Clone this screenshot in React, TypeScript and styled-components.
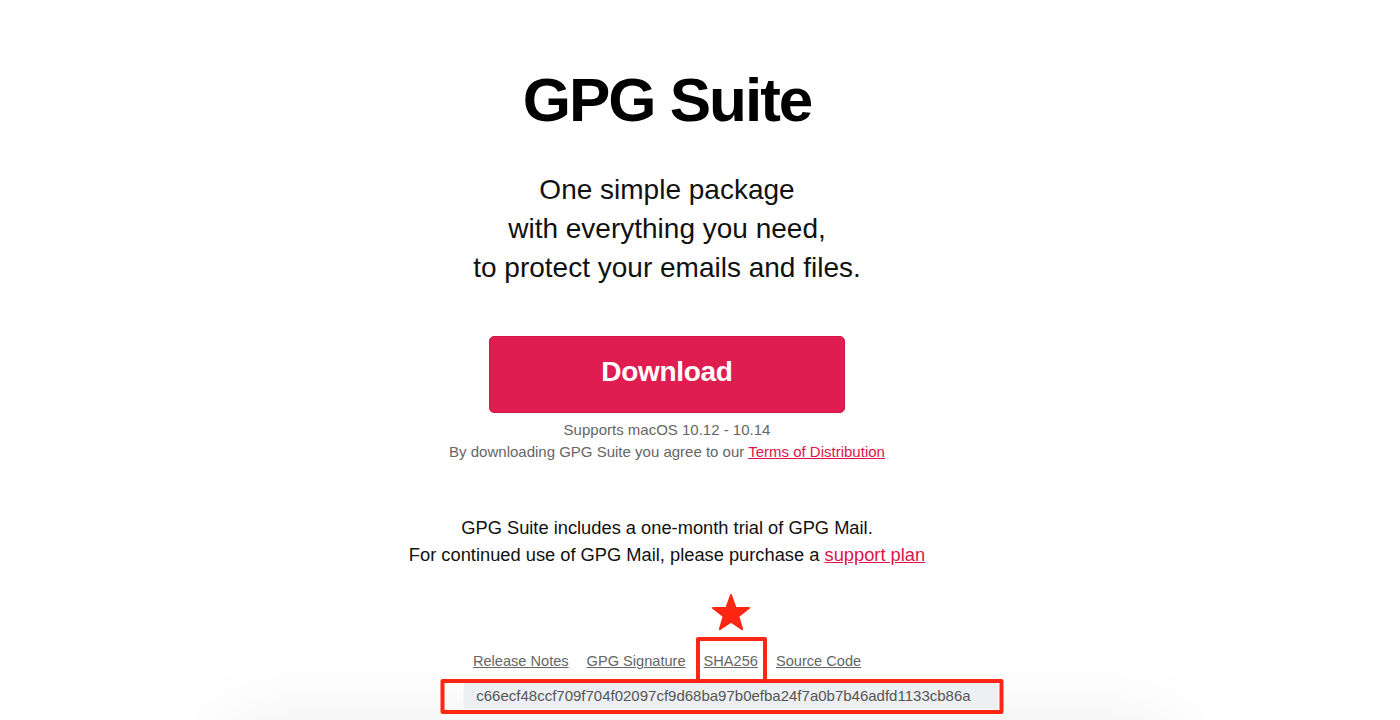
import React from "react";
import styled, { createGlobalStyle } from "styled-components";

const GlobalStyle = createGlobalStyle`
  html, body {
    margin: 0;
    padding: 0;
    background: #ffffff;
    overflow: hidden;
  }
  body {
    font-family: "Liberation Sans", Helvetica, Arial, sans-serif;
    color: #000;
  }
`;

const Page = styled.main`
  display: flex;
  flex-direction: column;
  align-items: center;
  text-align: center;
  padding: 69px 66px 0 0;
  height: 720px;
  overflow: hidden;
  box-sizing: border-box;

  & > * {
    flex-shrink: 0;
  }
`;

const Title = styled.h1`
  margin: 0;
  font-size: 62px;
  line-height: 62px;
  font-weight: 700;
  letter-spacing: -2px;
`;

const Tagline = styled.p`
  margin: 39px 0 0;
  font-size: 28px;
  line-height: 39px;
  font-weight: 400;
  color: #111;
`;

const DownloadButton = styled.a`
  margin-top: 49px;
  width: 356px;
  height: 77px;
  box-sizing: border-box;
  padding-bottom: 5px;
  display: flex;
  align-items: center;
  justify-content: center;
  background: #df1d51;
  border: 1px solid #d41848;
  border-radius: 5px;
  color: #fff;
  font-size: 28px;
  font-weight: 700;
  text-decoration: none;
  letter-spacing: -0.3px;
`;

const Note = styled.p`
  margin: 6px 0 0;
  font-size: 15px;
  line-height: 22px;
  color: #666;
`;

const Trial = styled.p`
  margin: 51px 0 0;
  font-size: 18.3px;
  line-height: 27px;
  color: #111;
`;

const RedLink = styled.a`
  color: #e0124a;
  text-decoration: underline;
`;

const LinksRow = styled.nav`
  margin-top: 83px;
  display: flex;
  gap: 18px;
  font-size: 14.6px;
  line-height: 20px;
`;

const FileLink = styled.a`
  color: #666;
  text-decoration: underline;
`;

const LinkSlot = styled.span`
  position: relative;
  display: inline-block;
`;

const Highlight = styled.span`
  position: absolute;
  left: -8px;
  right: -9px;
  top: -14px;
  bottom: -12px;
  border: 4px solid #ff2614;
  border-radius: 2px;
  pointer-events: none;
  z-index: 3;
`;

const Star = styled.svg`
  position: absolute;
  left: 50%;
  top: -57px;
  width: 40px;
  height: 38px;
  transform: translateX(-50%);
  z-index: 3;
`;

const Popover = styled.div`
  position: absolute;
  top: calc(100% + 12px);
  left: 50%;
  transform: translateX(-50%);
  width: 535px;
  height: 26px;
  box-sizing: border-box;
  background: #edf0f2;
  color: #555;
  font-size: 15px;
  line-height: 26px;
  text-align: left;
  padding-left: 13px;
  white-space: nowrap;
  z-index: 2;

  &::before {
    content: "";
    position: absolute;
    left: 50%;
    top: -5px;
    margin-left: -5px;
    border-left: 5px solid transparent;
    border-right: 5px solid transparent;
    border-bottom: 5px solid #edf0f2;
  }
`;

const HashFrame = styled.span`
  position: absolute;
  left: -23px;
  right: -5px;
  top: -4px;
  bottom: -5px;
  border: 4px solid #ff2614;
  border-radius: 2px;
  pointer-events: none;
`;

const NextCard = styled.section`
  margin-top: 67px;
  margin-left: 66px;
  width: 940px;
  height: 200px;
  background: #fff;
  border-radius: 12px;
  box-shadow: 0 0 90px rgba(0, 0, 0, 0.11);
`;

export default function App() {
  return (
    <>
      <GlobalStyle />
      <Page>
        <Title>GPG Suite</Title>
        <Tagline>
          One simple package
          <br />
          with everything you need,
          <br />
          to protect your emails and files.
        </Tagline>
        <DownloadButton href="#">Download</DownloadButton>
        <Note>
          Supports macOS 10.12 - 10.14
          <br />
          By downloading GPG Suite you agree to our{" "}
          <RedLink href="#">Terms of Distribution</RedLink>
        </Note>
        <Trial>
          GPG Suite includes a one-month trial of GPG Mail.
          <br />
          For continued use of GPG Mail, please purchase a{" "}
          <RedLink href="#">support plan</RedLink>
        </Trial>
        <LinksRow>
          <FileLink href="#">Release Notes</FileLink>
          <FileLink href="#">GPG Signature</FileLink>
          <LinkSlot>
            <Star viewBox="0 0 24 23">
              <path
                d="M12 0.6 L14.75 8.3 L22.9 8.5 L16.45 13.5 L18.75 21.3 L12 16.7 L5.25 21.3 L7.55 13.5 L1.1 8.5 L9.25 8.3 Z"
                fill="#ff2614"
                stroke="#ff2614"
                strokeWidth="1.2"
                strokeLinejoin="round"
              />
            </Star>
            <Highlight />
            <FileLink href="#">SHA256</FileLink>
            <Popover>
              c66ecf48ccf709f704f02097cf9d68ba97b0efba24f7a0b7b46adfd1133cb86a
              <HashFrame />
            </Popover>
          </LinkSlot>
          <FileLink href="#">Source Code</FileLink>
        </LinksRow>
        <NextCard />
      </Page>
    </>
  );
}
